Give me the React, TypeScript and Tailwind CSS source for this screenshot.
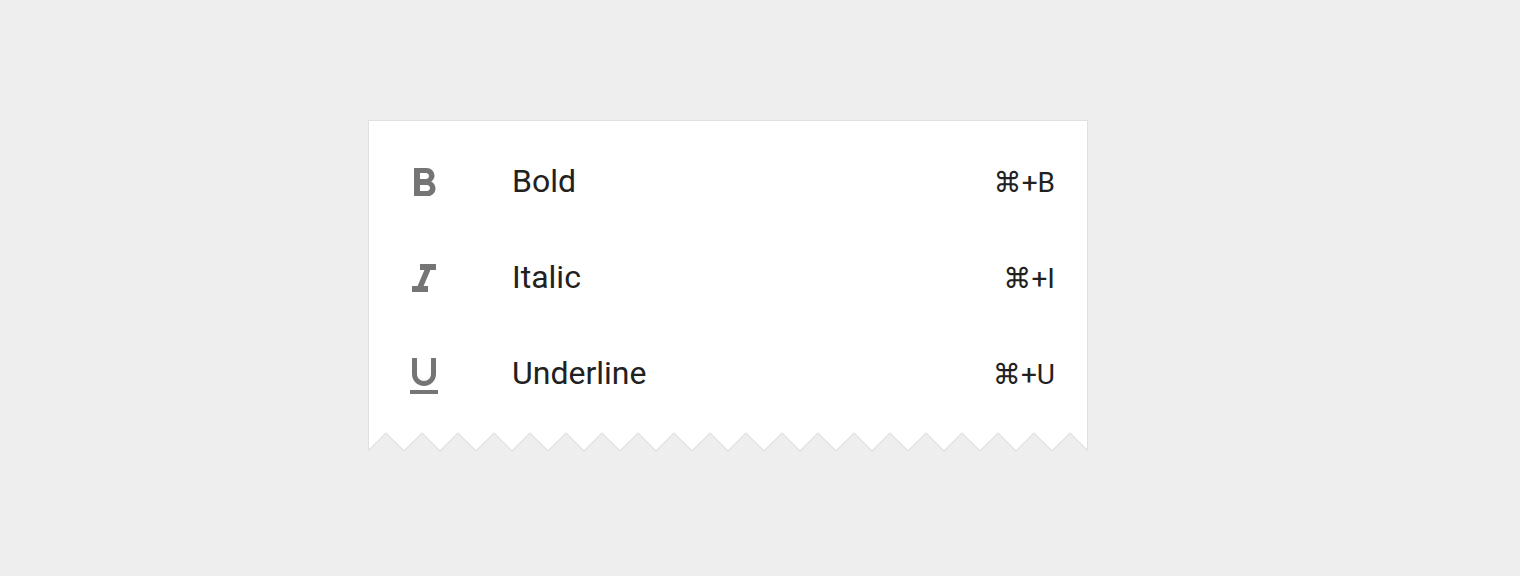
const rows = [
  {
    label: "Bold",
    key: "+B",
    d: "M15.6 10.79c.97-.67 1.65-1.77 1.65-2.79 0-2.26-1.75-4-4-4H7v14h7.04c2.09 0 3.71-1.7 3.71-3.79 0-1.52-.86-2.82-2.15-3.42zM10 6.5h3c.83 0 1.5.67 1.5 1.5s-.67 1.5-1.5 1.5h-3v-3zm3.5 9H10v-3h3.5c.83 0 1.5.67 1.5 1.5s-.67 1.5-1.5 1.5z",
  },
  {
    label: "Italic",
    key: "+I",
    d: "M10 4v3h2.21l-3.42 8H6v3h8v-3h-2.21l3.42-8H18V4z",
  },
  {
    label: "Underline",
    key: "+U",
    d: "M12 17c3.31 0 6-2.69 6-6V3h-2.5v8c0 1.93-1.57 3.5-3.5 3.5S8.5 12.93 8.5 11V3H6v8c0 3.31 2.69 6 6 6zm-7 2v2h14v-2H5z",
  },
];

const teeth = Array.from({ length: 20 }, (_, i) => `L${i * 36 + 18} 1L${i * 36 + 36} 19`).join("");

export default function App() {
  return (
    <div className="h-[576px] overflow-hidden bg-[#eeeeee] pt-[120px] pl-[368px] font-['Roboto',sans-serif]">
      <div className="w-[720px] border border-b-0 border-[#e0e0e0] bg-white pt-[15px]">
        {rows.map((r) => (
          <div key={r.label} className="flex h-24 items-center pl-[31px] pr-[32px] text-[#212121]">
            <svg viewBox="0 0 24 24" className="h-12 w-12 shrink-0 fill-[#757575]">
              <path d={r.d} />
            </svg>
            <span className="mb-[6px] ml-[64px] flex-1 text-[32px] leading-none font-[380]">{r.label}</span>
            <span className="mb-[2px] text-[28px] leading-none font-[380]">
              <span className="font-['DejaVu_Sans',sans-serif] font-normal">⌘</span>
              {r.key}
            </span>
          </div>
        ))}
        <div className="h-2" />
        <svg viewBox="0 0 720 20" className="-mx-px block h-5 w-[720px]">
          <path d={`M0 19${teeth}V20H0Z`} fill="#eeeeee" />
          <path d={`M0 19${teeth}`} fill="none" stroke="#e0e0e0" strokeWidth="1.2" />
        </svg>
      </div>
    </div>
  );
}
